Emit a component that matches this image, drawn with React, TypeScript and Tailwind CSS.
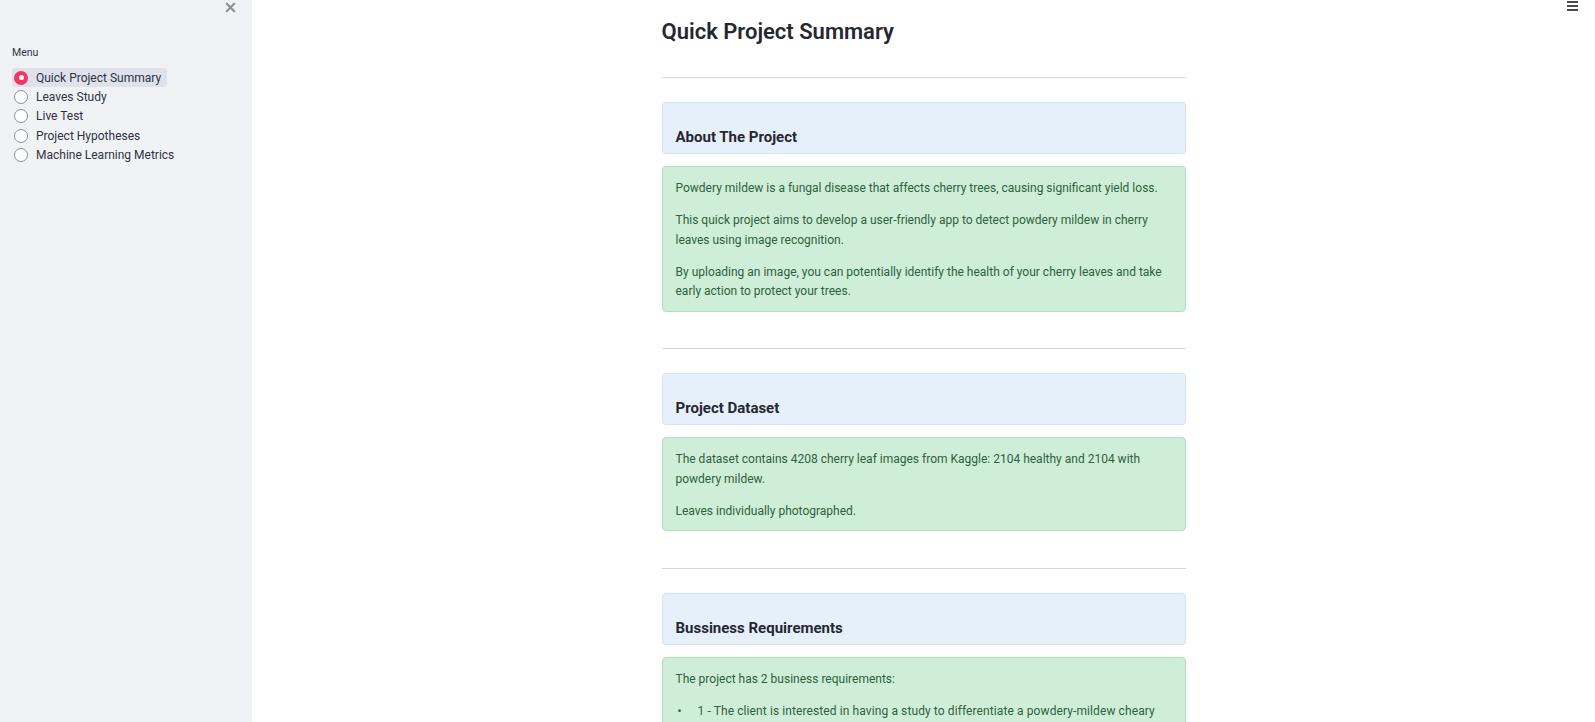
import React from 'react';

const menu = [
  "Quick Project Summary",
  "Leaves Study",
  "Live Test",
  "Project Hypotheses",
  "Machine Learning Metrics"
];

const sections = [
  {
    title: "About The Project",
    body: (
      <>
        <p>Powdery mildew is a fungal disease that affects cherry trees, causing significant yield loss.</p>
        <p className="mt-[12.5px]">This quick project aims to develop a user-friendly app to detect powdery mildew in cherry leaves using image recognition.</p>
        <p className="mt-[12.5px]">By uploading an image, you can potentially identify the health of your cherry leaves and take early action to protect your trees.</p>
      </>
    )
  },
  {
    title: "Project Dataset",
    body: (
      <>
        <p>The dataset contains 4208 cherry leaf images from Kaggle: 2104 healthy and 2104 with powdery mildew.</p>
        <p className="mt-[12.5px]">Leaves individually photographed.</p>
      </>
    )
  },
  {
    title: "Bussiness Requirements",
    body: (
      <>
        <p>The project has 2 business requirements:</p>
        <ul className="mt-[12.5px] pr-[14px] tracking-[0.1px]">
          <li className="flex">
            <span className="w-[22px] pl-[2px] shrink-0">•</span>
            <span>1 - The client is interested in having a study to differentiate a powdery-mildew cheary leaf from a healthy one.</span>
          </li>
          <li className="flex">
            <span className="w-[22px] pl-[2px] shrink-0">•</span>
            <span>2 - The client is interested in telling whether a given leaf is healthy or contains powdery mildew.</span>
          </li>
        </ul>
      </>
    )
  }
];

function Sidebar() {
  return (
    <aside className="w-[252px] shrink-0 bg-[#f0f2f6] min-h-screen">
      <div className="flex justify-end pr-[16px] pt-[1px] h-[14px]">
        <svg width="11" height="11" viewBox="0 0 12 12" className="mt-[1px]">
          <path d="M2 2 L10 10 M10 2 L2 10" stroke="#8d9096" strokeWidth="2.4" strokeLinecap="round" />
        </svg>
      </div>
      <div className="px-[12px] pt-[32px]">
        <div className="text-[10.5px] text-[#31333f] leading-[14px]">Menu</div>
        <div className="mt-[8px] flex flex-col">
          {menu.map((item, i) => (
            <div key={item} className="h-[19.4px] flex items-center">
              <div className={"flex items-center h-[19px] pl-[2px] pr-[6px] rounded-[3px] " + (i === 0 ? "bg-[#dfe2ea]" : "")}>
                {i === 0 ? (
                  <span className="w-[14px] h-[14px] rounded-full bg-[#f63366] flex items-center justify-center">
                    <span className="w-[5px] h-[5px] rounded-full bg-white" />
                  </span>
                ) : (
                  <span className="w-[14px] h-[14px] rounded-full border border-[#8c8f96] bg-white" />
                )}
                <span className="ml-[8px] text-[12px] text-[#31333f]">{item}</span>
              </div>
            </div>
          ))}
        </div>
      </div>
    </aside>
  );
}

export default function App() {
  return (
    <div className="flex w-full h-[722px] overflow-hidden bg-white font-['Roboto',sans-serif] text-[#31333f]">
      <Sidebar />
      <main className="flex-1 relative">
        <div className="absolute right-[17px] top-[1px] flex flex-col gap-[2px]">
          <span className="w-[11px] h-[2px] bg-[#4a4c55]" />
          <span className="w-[11px] h-[2px] bg-[#4a4c55]" />
          <span className="w-[11px] h-[2px] bg-[#4a4c55]" />
        </div>
        <div className="mx-auto w-[524px] pt-[18px]">
          <h1 className="text-[22px] leading-[27px] font-semibold text-[#262730]">Quick Project Summary</h1>
          {sections.map((s) => (
            <div key={s.title}>
              <div className={s.title === "About The Project" ? "mt-[32px]" : "mt-[36.5px]"}>
                <hr className="border-0 border-t border-[#d5d6d9]" />
              </div>
              <div className="mt-[24px] rounded-[4px] bg-[#e6f0fb] border border-[#d3e3f4] px-[13px] pt-[24px] pb-[6px]">
                <h4 className="text-[15px] leading-[20px] font-bold text-[#262730]">{s.title}</h4>
              </div>
              <div className="mt-[12px] rounded-[4px] bg-[#cfeed8] border border-[#b3dfc0] px-[13px] pt-[12px] pb-[9px] text-[12px] leading-[19.5px] text-[#30613d]">
                {s.body}
              </div>
            </div>
          ))}
        </div>
      </main>
    </div>
  );
}
